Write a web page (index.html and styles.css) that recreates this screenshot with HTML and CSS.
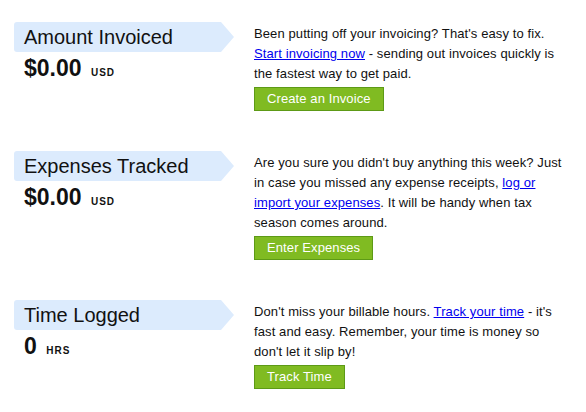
FILE: index.html
```html
<!DOCTYPE html>
<html>
<head>
<meta charset="utf-8">
<link rel="stylesheet" href="styles.css">
</head>
<body>
<div class="summary">
  <section class="row">
    <div class="stat">
      <div class="banner">Amount Invoiced</div>
      <div class="value">$0.00 <span class="unit">USD</span></div>
    </div>
    <div class="info">
      <p>Been putting off your invoicing? That's easy to fix.<br><a href="#">Start invoicing now</a> - sending out invoices quickly is<br>the fastest way to get paid.</p>
      <a class="btn" href="#">Create an Invoice</a>
    </div>
  </section>
  <section class="row">
    <div class="stat">
      <div class="banner">Expenses Tracked</div>
      <div class="value">$0.00 <span class="unit">USD</span></div>
    </div>
    <div class="info">
      <p>Are you sure you didn't buy anything this week? Just<br>in case you missed any expense receipts, <a href="#">log or<br>import your expenses</a>. It will be handy when tax<br>season comes around.</p>
      <a class="btn" href="#">Enter Expenses</a>
    </div>
  </section>
  <section class="row">
    <div class="stat">
      <div class="banner">Time Logged</div>
      <div class="value">0 <span class="unit">HRS</span></div>
    </div>
    <div class="info">
      <p>Don't miss your billable hours. <a href="#">Track your time</a> - it's<br>fast and easy. Remember, your time is money so<br>don't let it slip by!</p>
      <a class="btn" href="#">Track Time</a>
    </div>
  </section>
</div>
</body>
</html>
```
FILE: styles.css
```css
html, body {
  margin: 0;
  padding: 0;
  background: #fff;
}
body {
  font-family: "Liberation Sans", Arial, sans-serif;
  color: #111;
}
.summary {
  padding: 22px 0 0 14px;
  display: flex;
  flex-direction: column;
  gap: 40px;
}
.row {
  display: flex;
  align-items: flex-start;
}
.stat {
  width: 240px;
  flex: none;
}
.banner {
  width: 220px;
  height: 30px;
  box-sizing: border-box;
  padding-left: 10px;
  font-size: 20px;
  line-height: 30px;
  color: #111;
  background: #dcebfd;
  border-radius: 3px 0 0 3px;
  clip-path: polygon(0 0, 207px 0, 220px 15px, 207px 30px, 0 30px);
}
.value {
  margin-top: 2px;
  padding-left: 10px;
  font-size: 23px;
  line-height: 28px;
  font-weight: bold;
  color: #111;
}
.unit {
  font-size: 10px;
  letter-spacing: 1px;
  margin-left: 3px;
}
.info {
  width: 330px;
  padding-top: 2px;
}
.info p {
  margin: 0 0 3px;
  font-size: 13px;
  line-height: 20px;
  letter-spacing: 0.1px;
}
.info a {
  color: #00e;
}
.btn {
  display: inline-block;
  height: 24px;
  box-sizing: border-box;
  padding: 0 12px;
  font-size: 13px;
  line-height: 22px;
  letter-spacing: 0.1px;
  color: #fff !important;
  text-decoration: none;
  background: #80bb22;
  border: 1px solid #5d9a16;
}
```
